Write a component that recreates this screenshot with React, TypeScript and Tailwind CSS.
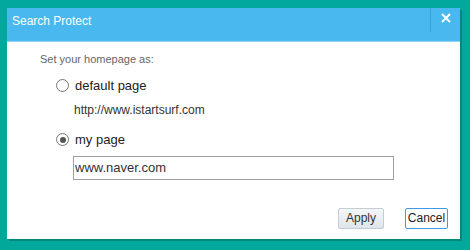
import { useState } from "react";

export default function App() {
  const [choice, setChoice] = useState<"default" | "mine">("mine");
  const [url, setUrl] = useState("www.naver.com");

  return (
    <div
      className="w-[470px] h-[250px] bg-[#03a89c] pt-[8px] pl-[7px]"
      style={{ fontFamily: '"Liberation Sans", Arial, sans-serif' }}
    >
      <div className="w-[453px] h-[231px] bg-white flex flex-col shadow-[2px_2px_0_#04887e]">
        {/* title bar */}
        <div className="h-[34px] bg-[#48b8ee] border-b border-[#8fd3f5] flex items-start">
          <div className="flex-1 pl-[5px] pt-[4px] text-[12px] text-white">Search Protect</div>
          <div className="w-[1px] h-[24px] bg-[#3a9fd2]" />
          <button className="w-[29px] h-[20px] flex items-center justify-center text-white">
            <svg width="10" height="10" viewBox="0 0 10 10" fill="none" stroke="white" strokeWidth="2">
              <line x1="1" y1="1" x2="9" y2="9" />
              <line x1="9" y1="1" x2="1" y2="9" />
            </svg>
          </button>
        </div>

        {/* body */}
        <div className="flex-1 flex flex-col pl-[33px] pt-[9px]">
          <div className="text-[11px] text-[#666]">Set your homepage as:</div>

          <label className="flex items-center gap-[6px] mt-[8px] ml-[16px] cursor-pointer" onClick={() => setChoice("default")}>
            <span className="w-[13px] h-[13px] rounded-full border border-[#777] bg-white flex items-center justify-center">
              {choice === "default" && <span className="w-[6px] h-[6px] rounded-full bg-[#555]" />}
            </span>
            <span className="text-[13px] text-[#222]">default page</span>
          </label>
          <div className="ml-[34px] mt-[6px] text-[12px] text-[#333]">http://www.istartsurf.com</div>

          <label className="flex items-center gap-[6px] mt-[11px] ml-[16px] cursor-pointer" onClick={() => setChoice("mine")}>
            <span className="w-[13px] h-[13px] rounded-full border border-[#777] bg-white flex items-center justify-center">
              {choice === "mine" && <span className="w-[6px] h-[6px] rounded-full bg-[#555]" />}
            </span>
            <span className="text-[13px] text-[#222]">my page</span>
          </label>
          <input
            value={url}
            onChange={(e) => setUrl(e.target.value)}
            className="ml-[33px] mt-[6px] w-[321px] h-[24px] border border-[#a0a0a0] px-[1px] text-[13px] text-[#333] outline-none"
          />

          <div className="flex justify-end gap-[21px] pr-[12px] mt-[28px]">
            <button className="w-[46px] h-[21px] rounded-[2px] border border-[#c4ccd4] bg-gradient-to-b from-[#f4f6f8] to-[#dfe5eb] text-[12px] text-[#333]">
              Apply
            </button>
            <button className="w-[43px] h-[21px] rounded-[2px] border border-[#3d9ae8] bg-white text-[12px] text-[#222]">
              Cancel
            </button>
          </div>
        </div>
      </div>
    </div>
  );
}
